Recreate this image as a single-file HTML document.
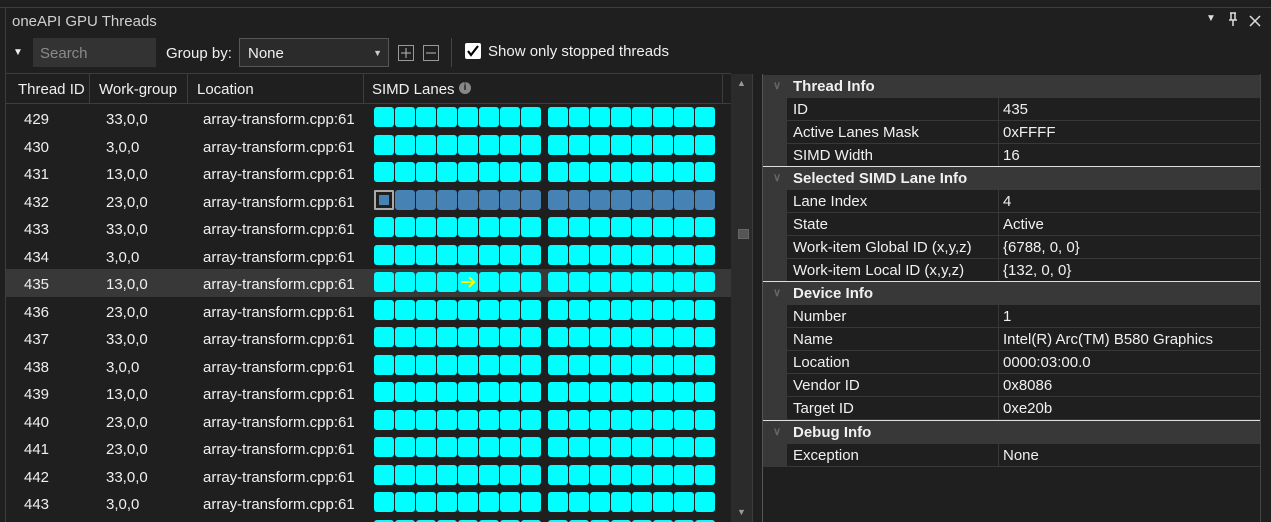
<!DOCTYPE html>
<html style="overflow:hidden;width:1271px;height:522px"><head><meta charset="utf-8"><style>
*{box-sizing:border-box;margin:0;padding:0}
html,body{overflow:hidden}
body{width:1271px;height:522px;background:#1f1f1f;font-family:"Segoe UI","Liberation Sans",sans-serif;color:#f0f0f0;font-size:14px;position:relative}
.a{position:absolute;white-space:nowrap}
.topline{left:0;top:7px;width:1271px;height:1px;background:#3d3d3d}
.leftline{left:5px;top:7px;width:1px;height:515px;background:#3d3d3d}
.title{left:12px;top:13px;font-size:15px;color:#d0d0d0}
.search{left:33px;top:38px;width:123px;height:29px;background:#333;color:#8a8a8a;padding:7px 7px;font-size:15px}
.combo{left:239px;top:38px;width:150px;height:29px;background:#2b2b2b;border:1px solid #555;padding:6px 8px;font-size:15px}
.hdr{top:74px;height:29px;padding:7px 0 0 0;font-size:15px}
.vsep{top:74px;width:1px;height:29px;background:#3d3d3d}
.row{left:6px;width:725px;height:27.5px}
.cell{position:absolute;top:7px;font-size:15px}
.lanes{position:absolute;left:368px;top:3px;height:20px}
.ln{position:absolute;top:0;width:20px;height:20px;border-radius:3px;background:#00ffff}
.pl{position:absolute;left:763px;width:497px;height:23px;font-size:15px}
.sec{background:#383838;font-weight:bold}
.sec span{position:absolute;left:30px;top:3px}
.sec i{position:absolute;left:10px;top:4px;font-style:normal;color:#666;font-size:11px}
.it{background:#383838}
.it .n{position:absolute;left:24px;top:0;width:211px;height:23px;background:#1f1f1f;padding:3px 6px;border-bottom:1px solid #383838}
.it .v{position:absolute;left:235px;top:0;width:262px;height:23px;background:#1f1f1f;padding:3px 4px;border-left:1px solid #383838;border-bottom:1px solid #383838}
</style></head><body>
<div class="a topline"></div><div class="a leftline"></div>
<div class="a title">oneAPI GPU Threads</div>
<div class="a" style="left:1206px;top:13px;font-size:10px;color:#ddd">▼</div>
<div class="a" style="left:1228px;top:12px;width:10px;height:14px"><svg width="10" height="14"><path d="M2 1h6M3 1v7M7 1v7M1 8h8M5 8v6" stroke="#ddd" stroke-width="1.5" fill="none"/></svg></div>
<div class="a" style="left:1249px;top:14px"><svg width="12" height="12"><path d="M1 1L11 11M11 1L1 11" stroke="#ddd" stroke-width="1.5"/></svg></div>
<div class="a" style="left:13px;top:47px;font-size:10px;color:#eee">▼</div>
<div class="a search">Search</div>
<div class="a" style="left:166px;top:45px;font-size:15px">Group by:</div>
<div class="a combo">None<span style="position:absolute;right:6px;top:9px;font-size:9px;color:#ccc">▼</span></div>
<div class="a" style="left:398px;top:45px;width:16px;height:16px;border:1px solid #999"><svg width="14" height="14" style="position:absolute;left:0;top:0"><path d="M7 2v10M2 7h10" stroke="#bbb"/></svg></div>
<div class="a" style="left:423px;top:45px;width:16px;height:16px;border:1px solid #999"><svg width="14" height="14" style="position:absolute;left:0;top:0"><path d="M2 7h10" stroke="#bbb"/></svg></div>
<div class="a" style="left:451px;top:38px;width:1px;height:29px;background:#444"></div>
<div class="a" style="left:465px;top:43px;width:16px;height:16px;background:#fff;border-radius:2px"><svg width="16" height="16"><path d="M3 8l3 4 7-9" stroke="#000" stroke-width="2.2" fill="none"/></svg></div>
<div class="a" style="left:488px;top:43px;font-size:15px">Show only stopped threads</div>

<div class="a" style="left:6px;top:73px;width:725px;height:1px;background:#3d3d3d"></div>
<div class="a" style="left:6px;top:103px;width:725px;height:1px;background:#3d3d3d"></div>
<div class="a hdr" style="left:18px">Thread ID</div>
<div class="a vsep" style="left:89px"></div>
<div class="a hdr" style="left:99px">Work-group</div>
<div class="a vsep" style="left:187px"></div>
<div class="a hdr" style="left:197px">Location</div>
<div class="a vsep" style="left:363px"></div>
<div class="a hdr" style="left:372px">SIMD Lanes</div>
<div class="a" style="left:459px;top:82px;width:12px;height:12px;border-radius:6px;background:#888;color:#1f1f1f;font-size:10px;font-weight:bold;text-align:center;line-height:12px">i</div>
<div class="a vsep" style="left:722px"></div>

<div id="rows">
<div class="a row" style="top:104px"><span class="cell" style="left:18px">429</span><span class="cell" style="left:100px">33,0,0</span><span class="cell" style="left:197px">array-transform.cpp:61</span><div class="lanes"></div></div>
<div class="a row" style="top:131.5px"><span class="cell" style="left:18px">430</span><span class="cell" style="left:100px">3,0,0</span><span class="cell" style="left:197px">array-transform.cpp:61</span><div class="lanes"></div></div>
<div class="a row" style="top:159px"><span class="cell" style="left:18px">431</span><span class="cell" style="left:100px">13,0,0</span><span class="cell" style="left:197px">array-transform.cpp:61</span><div class="lanes"></div></div>
<div class="a row" style="top:186.5px"><span class="cell" style="left:18px">432</span><span class="cell" style="left:100px">23,0,0</span><span class="cell" style="left:197px">array-transform.cpp:61</span><div class="lanes" data-i="1"></div></div>
<div class="a row" style="top:214px"><span class="cell" style="left:18px">433</span><span class="cell" style="left:100px">33,0,0</span><span class="cell" style="left:197px">array-transform.cpp:61</span><div class="lanes"></div></div>
<div class="a row" style="top:241.5px"><span class="cell" style="left:18px">434</span><span class="cell" style="left:100px">3,0,0</span><span class="cell" style="left:197px">array-transform.cpp:61</span><div class="lanes"></div></div>
<div class="a row" style="top:269px;background:#383838"><span class="cell" style="left:18px">435</span><span class="cell" style="left:100px">13,0,0</span><span class="cell" style="left:197px">array-transform.cpp:61</span><div class="lanes" data-s="1"></div></div>
<div class="a row" style="top:296.5px"><span class="cell" style="left:18px">436</span><span class="cell" style="left:100px">23,0,0</span><span class="cell" style="left:197px">array-transform.cpp:61</span><div class="lanes"></div></div>
<div class="a row" style="top:324px"><span class="cell" style="left:18px">437</span><span class="cell" style="left:100px">33,0,0</span><span class="cell" style="left:197px">array-transform.cpp:61</span><div class="lanes"></div></div>
<div class="a row" style="top:351.5px"><span class="cell" style="left:18px">438</span><span class="cell" style="left:100px">3,0,0</span><span class="cell" style="left:197px">array-transform.cpp:61</span><div class="lanes"></div></div>
<div class="a row" style="top:379px"><span class="cell" style="left:18px">439</span><span class="cell" style="left:100px">13,0,0</span><span class="cell" style="left:197px">array-transform.cpp:61</span><div class="lanes"></div></div>
<div class="a row" style="top:406.5px"><span class="cell" style="left:18px">440</span><span class="cell" style="left:100px">23,0,0</span><span class="cell" style="left:197px">array-transform.cpp:61</span><div class="lanes"></div></div>
<div class="a row" style="top:434px"><span class="cell" style="left:18px">441</span><span class="cell" style="left:100px">23,0,0</span><span class="cell" style="left:197px">array-transform.cpp:61</span><div class="lanes"></div></div>
<div class="a row" style="top:461.5px"><span class="cell" style="left:18px">442</span><span class="cell" style="left:100px">33,0,0</span><span class="cell" style="left:197px">array-transform.cpp:61</span><div class="lanes"></div></div>
<div class="a row" style="top:489px"><span class="cell" style="left:18px">443</span><span class="cell" style="left:100px">3,0,0</span><span class="cell" style="left:197px">array-transform.cpp:61</span><div class="lanes"></div></div>
<div class="a row" style="top:516.5px;height:5.5px;overflow:hidden"><div class="lanes"></div></div>
</div>

<div class="a" style="left:731px;top:74px;width:21px;height:448px;background:#2b2b2b"></div>
<div class="a" style="left:737px;top:78px;font-size:9px;color:#999">▲</div>
<div class="a" style="left:737px;top:507px;font-size:9px;color:#999">▼</div>
<div class="a" style="left:738px;top:229px;width:11px;height:10px;background:#555;border:1px solid #666"></div>
<div class="a" style="left:752px;top:74px;width:1px;height:448px;background:#3d3d3d"></div>
<div class="a" style="left:762px;top:74px;width:1px;height:448px;background:#555"></div>

<div class="a pl sec" style="top:75px"><i>∨</i><span>Thread Info</span></div>
<div class="a pl it" style="top:98px"><div class="n">ID</div><div class="v">435</div></div>
<div class="a pl it" style="top:121px"><div class="n">Active Lanes Mask</div><div class="v">0xFFFF</div></div>
<div class="a pl it" style="top:144px"><div class="n">SIMD Width</div><div class="v">16</div></div>
<div class="a" style="left:763px;top:166px;width:497px;height:1px;background:#ddd"></div>
<div class="a pl sec" style="top:167px"><i>∨</i><span>Selected SIMD Lane Info</span></div>
<div class="a pl it" style="top:190px"><div class="n">Lane Index</div><div class="v">4</div></div>
<div class="a pl it" style="top:213px"><div class="n">State</div><div class="v">Active</div></div>
<div class="a pl it" style="top:236px"><div class="n">Work-item Global ID (x,y,z)</div><div class="v">{6788, 0, 0}</div></div>
<div class="a pl it" style="top:259px"><div class="n">Work-item Local ID (x,y,z)</div><div class="v">{132, 0, 0}</div></div>
<div class="a" style="left:763px;top:281px;width:497px;height:1px;background:#ddd"></div>
<div class="a pl sec" style="top:282px"><i>∨</i><span>Device Info</span></div>
<div class="a pl it" style="top:305px"><div class="n">Number</div><div class="v">1</div></div>
<div class="a pl it" style="top:328px"><div class="n">Name</div><div class="v">Intel(R) Arc(TM) B580 Graphics</div></div>
<div class="a pl it" style="top:351px"><div class="n">Location</div><div class="v">0000:03:00.0</div></div>
<div class="a pl it" style="top:374px"><div class="n">Vendor ID</div><div class="v">0x8086</div></div>
<div class="a pl it" style="top:397px"><div class="n">Target ID</div><div class="v">0xe20b</div></div>
<div class="a" style="left:763px;top:420px;width:497px;height:1px;background:#ddd"></div>
<div class="a pl sec" style="top:421px"><i>∨</i><span>Debug Info</span></div>
<div class="a pl it" style="top:444px"><div class="n">Exception</div><div class="v">None</div></div>
<div class="a" style="left:1260px;top:74px;width:1px;height:448px;background:#444"></div>

<script>
document.querySelectorAll('.lanes').forEach(function(d){
  var h='';
  for(var k=0;k<16;k++){
    var x=k*21+(k>=8?6:0);
    var c=d.dataset.i?'#4682b4':'#00ffff';
    if(d.dataset.i&&k==0){h+='<div class="ln" style="left:'+x+'px;background:#1f1f1f;border:2px solid #aaa;border-radius:1px"><div style="position:absolute;left:3px;top:3px;width:10px;height:10px;background:#4682b4"></div></div>';continue;}
    var inner='';
    if(d.dataset.s&&k==4)inner='<svg width="20" height="20" style="position:absolute;left:0;top:0"><path d="M3 10h13M11 5l5 5-5 5" stroke="#ff0" stroke-width="2" fill="none"/></svg>';
    h+='<div class="ln" style="left:'+x+'px;background:'+c+'">'+inner+'</div>';
  }
  d.innerHTML=h;
});
</script>
</body></html>
